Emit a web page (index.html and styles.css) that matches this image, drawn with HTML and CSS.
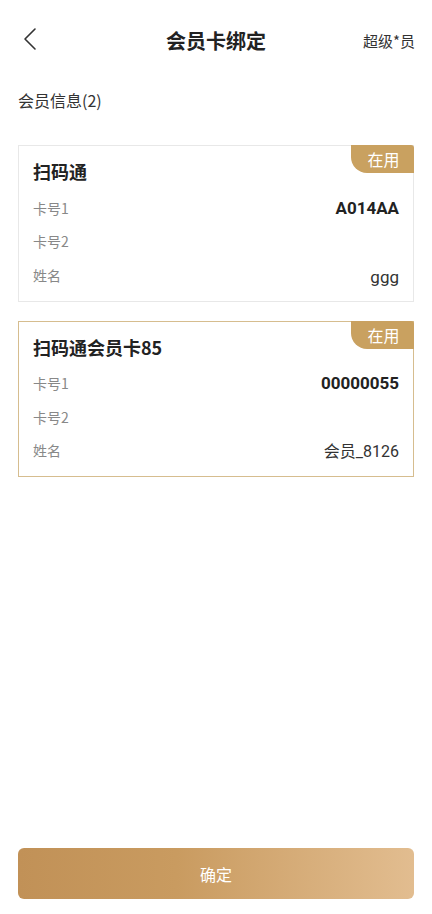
FILE: index.html
```html
<!DOCTYPE html>
<html lang="zh-CN">
<head>
    <meta charset="UTF-8">
    <meta name="viewport" content="width=device-width, initial-scale=1.0">
    <title>会员卡绑定</title>
    <link rel="stylesheet" href="styles.css">
</head>
<body>

<div class="page">
    <div class="nav-bar">
        <div class="nav-back">
            <svg width="16" height="24" viewBox="0 0 16 24">
                <path d="M13 2 L3 12 L13 22" fill="none" stroke="#333" stroke-width="1.6" stroke-linecap="round" stroke-linejoin="round"/>
            </svg>
        </div>
        <div class="nav-title">会员卡绑定</div>
        <div class="nav-user">超级*员</div>
    </div>

    <div class="section-title">会员信息(2)</div>

    <div class="card-list">
        <div class="card">
            <div class="badge">在用</div>
            <div class="card-name">扫码通</div>
            <div class="card-row">
                <span class="label">卡号1</span>
                <span class="value strong">A014AA</span>
            </div>
            <div class="card-row">
                <span class="label">卡号2</span>
                <span class="value"></span>
            </div>
            <div class="card-row">
                <span class="label">姓名</span>
                <span class="value name-lg">ggg</span>
            </div>
        </div>

        <div class="card selected">
            <div class="badge">在用</div>
            <div class="card-name">扫码通会员卡85</div>
            <div class="card-row">
                <span class="label">卡号1</span>
                <span class="value strong">00000055</span>
            </div>
            <div class="card-row">
                <span class="label">卡号2</span>
                <span class="value"></span>
            </div>
            <div class="card-row">
                <span class="label">姓名</span>
                <span class="value">会员_8126</span>
            </div>
        </div>
    </div>

    <div class="footer">
        <button class="btn-confirm">确定</button>
    </div>
</div>

</body>
</html>
```

FILE: styles.css
```css
body {
    margin: 0;
    font-family: "Noto Sans CJK SC", "Noto Sans", sans-serif;
    background-color: #fff;
    color: #333;
}
.page {
    height: 914px;
    display: flex;
    flex-direction: column;
    padding: 0 18px;
    box-sizing: border-box;
}
.nav-bar {
    height: 80px;
    display: flex;
    align-items: center;
    justify-content: space-between;
    position: relative;
}
.nav-back {
    width: 40px;
    display: flex;
    align-items: center;
    padding-left: 4px;
    margin-top: -2px;
}
.nav-title {
    font-size: 20px;
    font-weight: bold;
    color: #222;
    position: absolute;
    left: 50%;
    transform: translateX(-50%);
}
.nav-user {
    font-size: 15px;
    color: #333;
    margin-right: -1px;
}
.section-title {
    font-size: 16px;
    line-height: 20px;
    color: #333;
    margin-top: 10px;
}
.card-list {
    display: flex;
    flex-direction: column;
    gap: 19px;
    margin-top: 35px;
}
.card {
    position: relative;
    border: 1px solid #e8e8e8;
    padding: 12px 14px 9px 14px;
    display: flex;
    flex-direction: column;
}
.card.selected {
    border-color: #d6bd8f;
}
.badge {
    position: absolute;
    top: -1px;
    right: -1px;
    width: 63px;
    height: 28px;
    line-height: 28px;
    text-align: center;
    background-color: #c9a160;
    color: #fff;
    font-size: 16px;
    border-radius: 0 3px 0 16px;
    box-sizing: border-box;
    padding-left: 2px;
}
.card-name {
    font-size: 18px;
    font-weight: bold;
    color: #222;
    line-height: 26px;
    margin-bottom: 7px;
}
.card-row {
    display: flex;
    justify-content: space-between;
    align-items: center;
    height: 33.5px;
}
.label {
    font-size: 14px;
    color: #888;
}
.value {
    font-family: Roboto, "Noto Sans CJK SC", sans-serif;
    font-size: 16px;
    color: #333;
}
.value.strong {
    font-size: 17px;
    font-weight: bold;
    color: #222;
}
.value.name-lg {
    font-size: 17px;
    margin-top: 4px;
}
.footer {
    margin-top: auto;
    padding-bottom: 15px;
}
.btn-confirm {
    width: 100%;
    height: 51px;
    border: none;
    border-radius: 6px;
    background: linear-gradient(to right, #c19157, #c99b60 40%, #e2bd90);
    color: #fff;
    font-size: 16px;
    font-family: inherit;
}
```
